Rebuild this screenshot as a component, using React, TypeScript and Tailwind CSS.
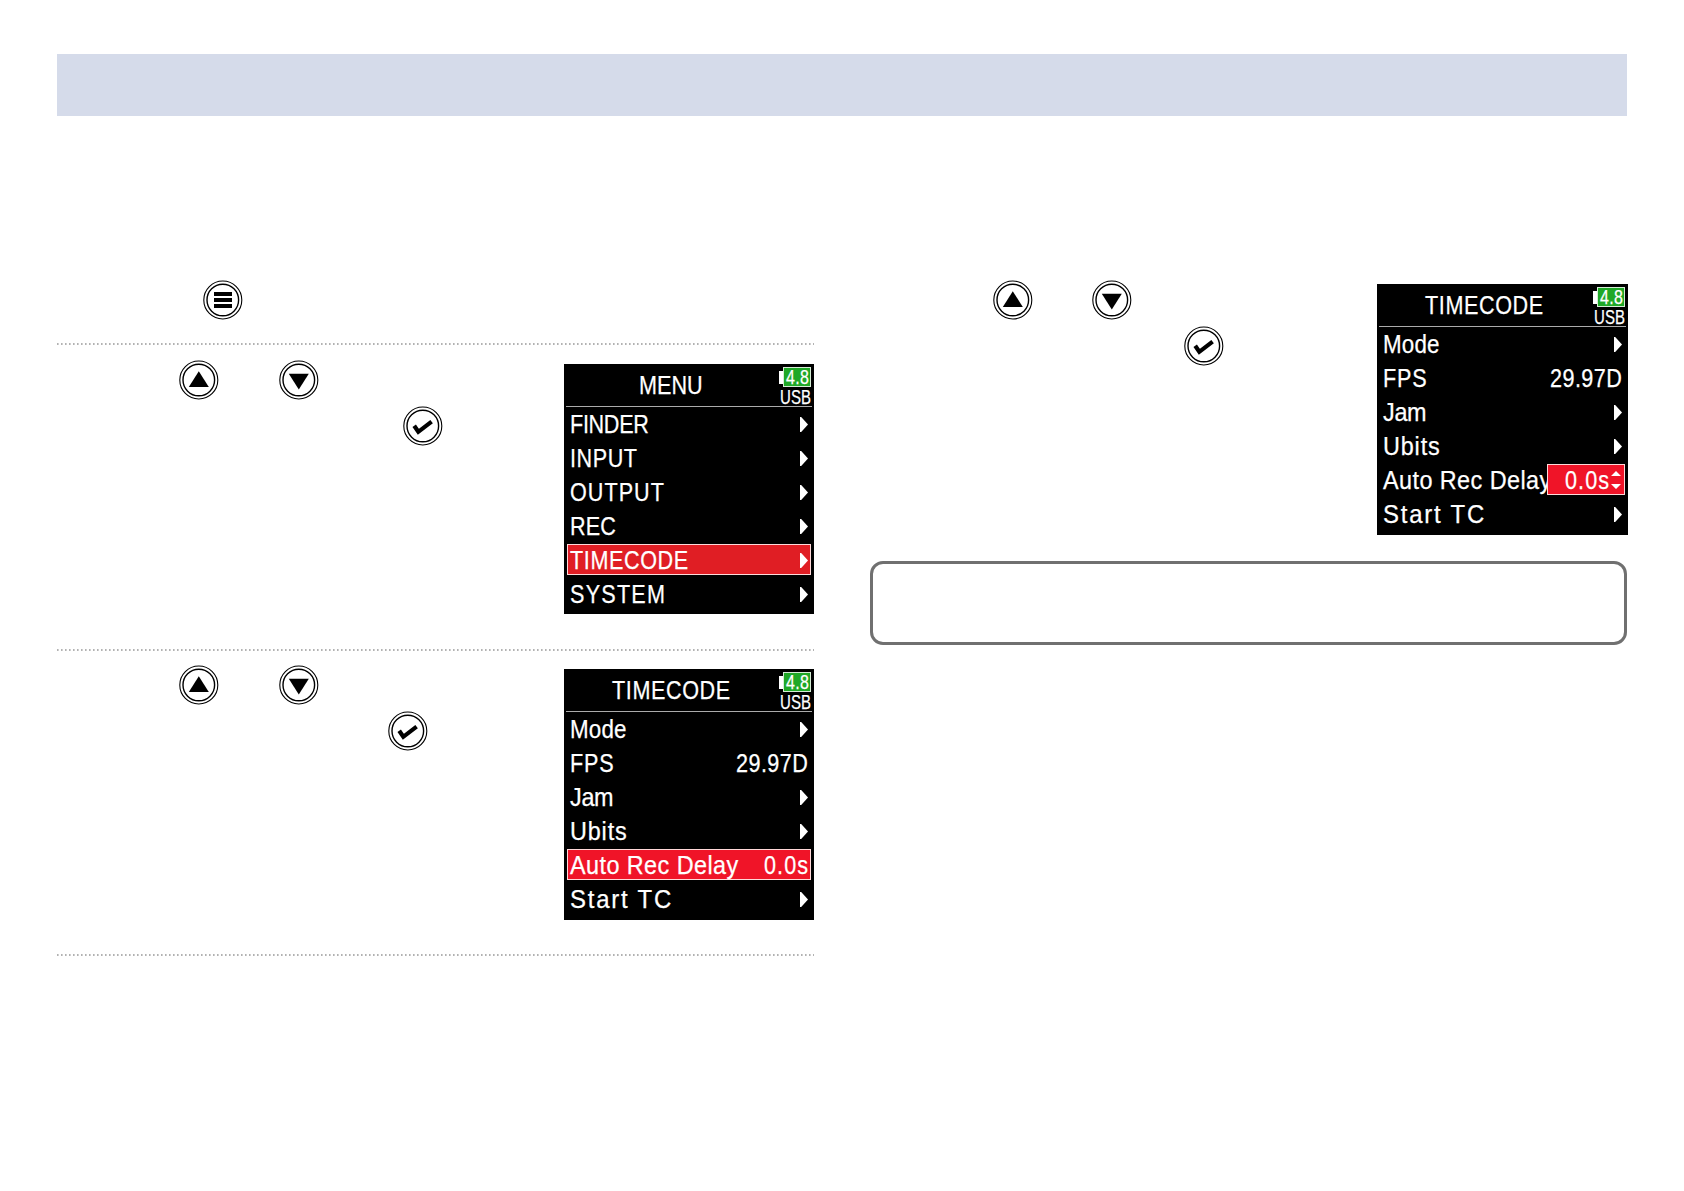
import { useLayoutEffect, useRef } from "react";
import clsx from "clsx";

type Row = {
  label: string;
  width: number;
  scale?: number;
  value?: string;
  valueWidth?: number;
  state?: "selected" | "editing";
};

const MENU_ROWS: Row[] = [
  { label: "FINDER", width: 79 },
  { label: "INPUT", width: 67 },
  { label: "OUTPUT", width: 94 },
  { label: "REC", width: 46 },
  { label: "TIMECODE", width: 118, state: "selected" },
  { label: "SYSTEM", width: 95 },
];

function timecodeRows(state: Row["state"]): Row[] {
  return [
    { label: "Mode", width: 56.5, scale: 0.86 },
    { label: "FPS", width: 44 },
    { label: "Jam", width: 43.5, scale: 0.9 },
    { label: "Ubits", width: 56.5, scale: 0.9 },
    {
      label: "Auto Rec Delay",
      width: 168.5,
      scale: 0.9,
      value: "0.0s",
      valueWidth: 44,
      state,
    },
    { label: "Start TC", width: 101, scale: 0.92 },
  ].map((row) =>
    row.label === "FPS" ? { ...row, value: "29.97D", valueWidth: 72 } : row
  ) as Row[];
}

// Narrow LCD lettering: glyphs are condensed, the rest is letter spacing
function LcdText({
  text,
  width,
  scale = 0.83,
  className,
}: {
  text: string;
  width: number;
  scale?: number;
  className?: string;
}) {
  const ref = useRef<HTMLSpanElement>(null);

  useLayoutEffect(() => {
    const el = ref.current;
    if (!el) return;
    el.style.letterSpacing = "0px";
    const spacing = (width / scale - el.offsetWidth) / (text.length - 1);
    el.style.letterSpacing = `${spacing}px`;
    el.style.transform = `scaleX(${scale})`;
  }, [text, width, scale]);

  return (
    <span
      className={clsx("block shrink-0 leading-none", className)}
      style={{ width }}
    >
      <span
        ref={ref}
        className="block w-max origin-left whitespace-nowrap [-webkit-text-stroke:0.25px_white]"
      >
        {text}
      </span>
    </span>
  );
}

function Battery() {
  return (
    <div className="flex w-[33px] shrink-0 flex-col pt-[3px]">
      <div className="flex items-center">
        <div className="h-[13px] w-[4px] bg-white" />
        <div className="flex h-[20px] w-[28px] items-center justify-center border border-[#d5ecd5] bg-[#1fa827]">
          <LcdText text="4.8" width={23} scale={0.8} className="text-[20px]" />
        </div>
      </div>
      <LcdText
        text="USB"
        width={31}
        scale={0.75}
        className="ml-[1px] text-[20px]"
      />
    </div>
  );
}

function Arrow() {
  return (
    <svg width="8" height="15" viewBox="0 0 8 15" className="mt-[1px] shrink-0">
      <path d="M0 0h1.2L8 7.5 1.2 15H0z" fill="#fff" />
    </svg>
  );
}

function ScreenRow({ row, red }: { row: Row; red: string }) {
  const editing = row.state === "editing";
  return (
    <div className="flex h-[33.95px] items-center px-[3px]">
      <div
        className={clsx(
          "relative flex h-[31px] w-full items-center justify-between border pr-[2px] pl-[2px]",
          row.state === "selected" ? `border-[#ffd9d9] ${red}` : "border-transparent"
        )}
      >
        <LcdText text={row.label} width={row.width} scale={row.scale} />
        {editing && (
          <div
            className={clsx(
              "absolute -top-px -right-px flex h-[31px] w-[78px] items-center justify-end gap-[2px] border border-[#ffd9d9] pr-[3px]",
              red
            )}
          >
            <LcdText text={row.value!} width={row.valueWidth!} />
            <svg width="10" height="18" viewBox="0 0 10 18" className="shrink-0">
              <path d="M0 5L5 0l5 5zM0 13h10l-5 5z" fill="#fff" />
            </svg>
          </div>
        )}
        {!editing && row.value && (
          <LcdText text={row.value} width={row.valueWidth!} />
        )}
        {!row.value && <Arrow />}
      </div>
    </div>
  );
}

function Screen({
  title,
  titleWidth,
  rows,
  red,
  className,
}: {
  title: string;
  titleWidth: number;
  rows: Row[];
  red: string;
  className?: string;
}) {
  return (
    <div
      className={clsx(
        "shrink-0 overflow-hidden bg-black text-[26px] text-white",
        className
      )}
    >
      <div className="mx-[2px] flex h-[43px] justify-between border-b border-[#aaa]">
        <div className="flex w-[213px] items-center justify-center pr-[4px]">
          <LcdText text={title} width={titleWidth} />
        </div>
        <Battery />
      </div>
      {rows.map((row) => (
        <ScreenRow key={row.label} row={row} red={red} />
      ))}
    </div>
  );
}

function Key({
  kind,
  className,
}: {
  kind: "menu" | "up" | "down" | "check";
  className?: string;
}) {
  return (
    <svg
      width="40"
      height="40"
      viewBox="0 0 40 40"
      className={clsx("shrink-0", className)}
      fill="none"
      stroke="#000"
    >
      <circle cx="19.8" cy="20" r="19" strokeWidth="1.1" />
      <circle cx="19.8" cy="20" r="15.8" strokeWidth="1.4" />
      {kind === "menu" && (
        <path d="M11 14h18M11 20h18M11 26h18" strokeWidth="4" />
      )}
      {kind === "up" && <path d="M19.8 11.2L29.8 27h-20z" fill="#000" stroke="none" />}
      {kind === "down" && <path d="M19.8 29.6L9.8 13.8h20z" fill="#000" stroke="none" />}
      {kind === "check" && (
        <path d="M11.2 19.8L15.3 25.8L28.6 15.6" strokeWidth="4.2" />
      )}
    </svg>
  );
}

function Dots() {
  return (
    <svg width="757" height="2" className="block">
      <line
        x1="0"
        y1="1"
        x2="757"
        y2="1"
        stroke="#999"
        strokeWidth="1.6"
        strokeDasharray="1.6 2.4"
      />
    </svg>
  );
}

export default function App() {
  return (
    <div className="h-[1191px] w-[1684px] overflow-hidden bg-white pt-[54px] pr-[56px] pl-[57px] font-['Liberation_Sans',Arial,sans-serif]">
      <header className="h-[62px] w-[1570px] bg-[#d5dbea]" />

      <main className="mt-[164px] flex gap-[56px]">
        <div className="w-[757px]">
          <div className="h-[63px]">
            <Key kind="menu" className="ml-[146px]" />
          </div>
          <Dots />

          <div className="flex h-[303.5px] justify-between pt-[19px]">
            <div className="-mt-[4px]">
              <div className="flex gap-[59.5px] pl-[122px]">
                <Key kind="up" />
                <Key kind="down" />
              </div>
              <Key kind="check" className="mt-[6px] ml-[346px]" />
            </div>
            <Screen
              title="MENU"
              titleWidth={64}
              rows={MENU_ROWS}
              red="bg-[#e01e24]"
              className="h-[250px] w-[250px]"
            />
          </div>
          <Dots />

          <div className="flex h-[303.5px] justify-between pt-[18.5px]">
            <div className="-mt-[4px]">
              <div className="flex gap-[59.5px] pl-[122px]">
                <Key kind="up" />
                <Key kind="down" />
              </div>
              <Key kind="check" className="mt-[6px] ml-[331px]" />
            </div>
            <Screen
              title="TIMECODE"
              titleWidth={118}
              rows={timecodeRows("selected")}
              red="bg-[#f01428]"
              className="h-[251px] w-[250px]"
            />
          </div>
          <Dots />
        </div>

        <div className="w-[758px]">
          <div className="flex justify-between pt-[4px]">
            <div className="-mt-[4px]">
              <div className="flex gap-[59px] pl-[122.5px]">
                <Key kind="up" />
                <Key kind="down" />
              </div>
              <Key kind="check" className="mt-[6px] ml-[313.5px]" />
            </div>
            <Screen
              title="TIMECODE"
              titleWidth={118}
              rows={timecodeRows("editing")}
              red="bg-[#f01428]"
              className="h-[251px] w-[251px]"
            />
          </div>
          <div className="mt-[26px] h-[84px] w-[757px] rounded-[13px] border-[3px] border-[#707070]" />
        </div>
      </main>
    </div>
  );
}
